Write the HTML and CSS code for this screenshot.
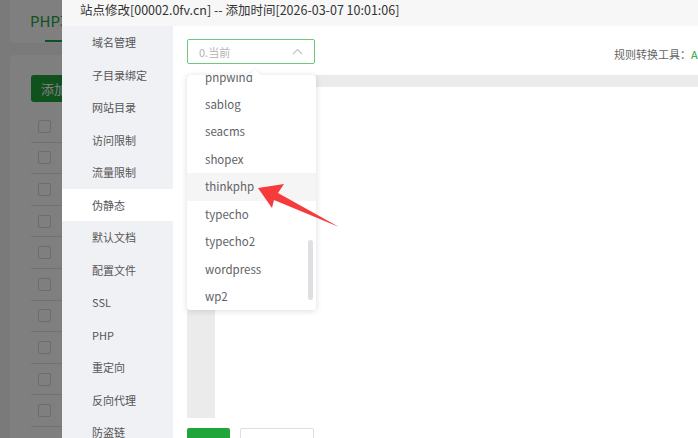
FILE: index.html
```
<!DOCTYPE html>
<html lang="zh-CN">
<head>
<meta charset="utf-8">
<title>站点修改</title>
<link rel="stylesheet" href="styles.css">
</head>
<body>
<div class="page">
  <div class="tabs-card">
    <div class="tab">PHP项目<span class="tab-line"></span></div>
  </div>
  <div class="list-card">
    <div class="btn-add">添加站点</div>
    <div class="rows">
      <div class="row"><span class="cb"></span></div>
      <div class="row"><span class="cb"></span></div>
      <div class="row"><span class="cb"></span></div>
      <div class="row"><span class="cb"></span></div>
      <div class="row"><span class="cb"></span></div>
      <div class="row"><span class="cb"></span></div>
      <div class="row"><span class="cb"></span></div>
      <div class="row"><span class="cb"></span></div>
      <div class="row"><span class="cb"></span></div>
      <div class="row"><span class="cb"></span></div>
    </div>
  </div>
</div>
<div class="shade"></div>

<div class="modal">
  <div class="modal-head">站点修改[00002.0fv.cn] -- 添加时间[2026-03-07 10:01:06]</div>
  <div class="modal-body">
    <ul class="side">
      <li>域名管理</li>
      <li>子目录绑定</li>
      <li>网站目录</li>
      <li>访问限制</li>
      <li>流量限制</li>
      <li class="active">伪静态</li>
      <li>默认文档</li>
      <li>配置文件</li>
      <li>SSL</li>
      <li>PHP</li>
      <li>重定向</li>
      <li>反向代理</li>
      <li>防盗链</li>
    </ul>
    <div class="main">
      <div class="toolbar">
        <div class="select">
          <span class="select-text">0.当前</span>
          <svg class="chev" width="11" height="7" viewBox="0 0 11 7"><path d="M1 6 L5.5 1.5 L10 6" fill="none" stroke="#c0c4cc" stroke-width="1.2"/></svg>
        </div>
        <div class="tool-link">规则转换工具：<span class="green">Apache转Nginx</span></div>
      </div>
      <div class="editor">
        <div class="editor-top"></div>
        <div class="editor-body">
          <div class="gutter"></div>
          <div class="code"></div>
        </div>
      </div>
      <div class="actions">
        <span class="btn-save">保存</span>
        <span class="btn-default">另存为模板</span>
      </div>
    </div>
  </div>

  <div class="dropdown">
    <span class="caret"></span>
    <ul class="opts">
      <li>pnpwind</li>
      <li>sablog</li>
      <li>seacms</li>
      <li>shopex</li>
      <li class="hover">thinkphp</li>
      <li>typecho</li>
      <li>typecho2</li>
      <li>wordpress</li>
      <li>wp2</li>
    </ul>
    <span class="scroll-thumb"></span>
  </div>
</div>

<svg class="arrow" width="698" height="438" viewBox="0 0 698 438">
  <polygon points="258,188 284,184 278,193 339,227 274,200 272,208" fill="#f53b3b"/>
</svg>
</body>
</html>
```
FILE: styles.css
```
* { box-sizing: border-box; }
html, body { margin: 0; padding: 0; }
body {
  width: 698px;
  height: 438px;
  overflow: hidden;
  position: relative;
  background: #f4f4f4;
  font-family: "Noto Sans CJK SC", "Noto Sans", sans-serif;
}
ul { list-style: none; margin: 0; padding: 0; }

/* background page */
.page { padding-left: 10px; display: flex; flex-direction: column; gap: 12px; }
.tabs-card {
  background: #fff;
  height: 43px;
  border-radius: 0 0 4px 4px;
  padding-left: 20px;
}
.tab {
  position: relative;
  display: inline-block;
  color: #20a53a;
  font-size: 15px;
  line-height: 42px;
}
.tab-line {
  position: absolute;
  left: 15px; right: 0; bottom: 0;
  height: 2px;
  background: #20a53a;
}
.list-card { background: #fff; border-radius: 4px; padding: 20px 0 0 21px; height: 400px; }
.btn-add {
  display: inline-block;
  background: #20a53a;
  color: #fff;
  font-size: 13px;
  line-height: 27px;
  padding: 0 10px;
  border-radius: 3px;
}
.rows { margin-top: 9px; }
.row {
  height: 31.6px;
  border-bottom: 1px solid #e2e2e2;
  display: flex;
  align-items: center;
  padding-left: 7px;
}
.cb { width: 13px; height: 13px; border: 1px solid #d8d8d8; border-radius: 2px; background: #fff; }
.shade { position: absolute; inset: 0; background: rgba(0, 0, 0, 0.5); }

/* modal */
.modal {
  position: absolute;
  left: 62px;
  top: 0;
  width: 760px;
  height: 438px;
  overflow: hidden;
  background: #fff;
  display: flex;
  flex-direction: column;
}
.modal-head {
  flex: none;
  height: 26px;
  background: #f7f7f7;
  color: #333;
  font-size: 12.5px;
  line-height: 14px;
  padding: 0 0 6px 18px;
  display: flex;
  align-items: center;
  white-space: nowrap;
}
.modal-body { display: flex; flex: 1; }
.side { width: 111px; flex: none; background: #f0f1f5; }
.side li {
  height: 32.5px;
  line-height: 32.5px;
  padding-left: 30px;
  font-size: 11px;
  color: #555;
}
.side li.active { background: #fff; }

.main { flex: 1; padding: 13px 0 0 14px; display: flex; flex-direction: column; }
.toolbar { display: flex; align-items: center; height: 25px; }
.select {
  flex: none;
  width: 128px;
  height: 25px;
  border: 1px solid #6cc97b;
  border-radius: 2px;
  display: flex;
  align-items: center;
  justify-content: space-between;
  padding: 0 11px 0 11px;
}
.select-text { font-size: 11px; color: #b4b4b4; }
.chev { display: block; }
.tool-link { font-size: 11px; color: #666; white-space: nowrap; margin: 4px 0 0 299px; }
.green { color: #20a53a; }

.editor { margin-top: 11px; display: flex; flex-direction: column; height: 343px; }
.editor-top { height: 12px; background: #ebebeb; }
.editor-body { flex: 1; display: flex; }
.gutter { width: 28px; background: #ebebeb; }
.code { flex: 1; background: #fff; }

.actions { margin-top: 10px; display: flex; gap: 10px; }
.btn-save {
  display: inline-block;
  width: 43px; height: 30px;
  background: #20a53a;
  border-radius: 2px;
  color: #fff;
  font-size: 12px;
  line-height: 40px;
  text-align: center;
}
.btn-default {
  display: inline-block;
  width: 74px; height: 30px;
  border: 1px solid #dcdfe6;
  border-radius: 2px;
  color: #555;
  font-size: 12px;
  line-height: 40px;
  text-align: center;
  white-space: nowrap;
}

/* dropdown */
.dropdown {
  position: absolute;
  left: 125px;
  top: 75px;
  width: 129px;
  height: 235px;
  background: #fff;
  border-radius: 3px;
  box-shadow: 0 1px 6px rgba(0, 0, 0, 0.14);
}
.caret {
  position: absolute;
  left: 64px; top: -4px;
  width: 8px; height: 8px;
  background: #fff;
  transform: rotate(45deg);
  box-shadow: -1px -1px 2px rgba(0,0,0,0.06);
}
.opts {
  position: relative;
  height: 235px;
  overflow: hidden;
}
.opts li {
  height: 27.45px;
  line-height: 27.45px;
  padding-left: 18px;
  font-size: 11.5px;
  color: #606266;
}
.opts li:first-child { margin-top: -11.5px; }
.opts li.hover { background: #f5f5f5; }
.scroll-thumb {
  position: absolute;
  right: 3px;
  top: 165px;
  width: 5px;
  height: 60px;
  border-radius: 3px;
  background: #dedfe2;
}

.arrow { position: absolute; left: 0; top: 0; }
```
